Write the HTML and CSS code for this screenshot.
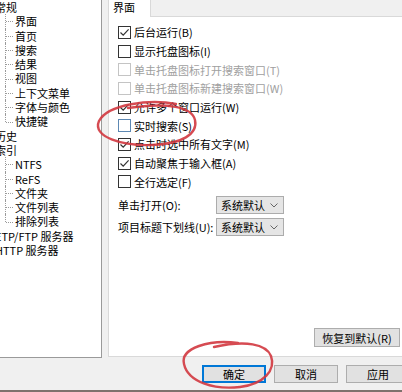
FILE: index.html
```html
<!DOCTYPE html>
<html lang="zh-CN">
<head>
  <meta charset="UTF-8">
  <title>选项</title>
  <link rel="stylesheet" href="styles.css">
</head>
<body>
  <div class="window">
    <div class="main">
      <ul class="tree">
        <li class="row top">常规</li>
        <li class="row kid">界面</li>
        <li class="row kid">首页</li>
        <li class="row kid">搜索</li>
        <li class="row kid">结果</li>
        <li class="row kid">视图</li>
        <li class="row kid">上下文菜单</li>
        <li class="row kid">字体与颜色</li>
        <li class="row kid last">快捷键</li>
        <li class="row top">历史</li>
        <li class="row top">索引</li>
        <li class="row kid">NTFS</li>
        <li class="row kid">ReFS</li>
        <li class="row kid">文件夹</li>
        <li class="row kid">文件列表</li>
        <li class="row kid last">排除列表</li>
        <li class="row top">ETP/FTP 服务器</li>
        <li class="row top">HTTP 服务器</li>
      </ul>

      <div class="pane">
        <div class="tabs">
          <div class="tab">界面</div>
        </div>
        <div class="page">
          <div class="check on"><span class="box"><svg viewBox="0 0 11 11"><path d="M1.5 5.5 L4.2 8.2 L9.6 2.4"/></svg></span>后台运行(B)</div>
          <div class="check"><span class="box"></span>显示托盘图标(I)</div>
          <div class="check off"><span class="box"></span>单击托盘图标打开搜索窗口(T)</div>
          <div class="check off"><span class="box"></span>单击托盘图标新建搜索窗口(W)</div>
          <div class="check on"><span class="box"><svg viewBox="0 0 11 11"><path d="M1.5 5.5 L4.2 8.2 L9.6 2.4"/></svg></span>允许多个窗口运行(W)</div>
          <div class="check hot"><span class="box"></span>实时搜索(S)</div>
          <div class="check on"><span class="box"><svg viewBox="0 0 11 11"><path d="M1.5 5.5 L4.2 8.2 L9.6 2.4"/></svg></span>点击时选中所有文字(M)</div>
          <div class="check on"><span class="box"><svg viewBox="0 0 11 11"><path d="M1.5 5.5 L4.2 8.2 L9.6 2.4"/></svg></span>自动聚焦于输入框(A)</div>
          <div class="check"><span class="box"></span>全行选定(F)</div>

          <div class="combos">
            <span class="label">单击打开(O):</span>
            <div class="combo">系统默认<svg viewBox="0 0 8 5"><path d="M0.5 0.5 L4 4 L7.5 0.5"/></svg></div>
            <span class="label">项目标题下划线(U):</span>
            <div class="combo">系统默认<svg viewBox="0 0 8 5"><path d="M0.5 0.5 L4 4 L7.5 0.5"/></svg></div>
          </div>

          <div class="page-foot">
            <button class="btn reset">恢复到默认(R)</button>
          </div>
        </div>
      </div>
    </div>

    <div class="footer">
      <button class="btn default">确定</button>
      <button class="btn">取消</button>
      <button class="btn">应用</button>
    </div>

    <!-- hand-drawn red marks on top of the dialog -->
    <svg class="marks" width="412" height="392" viewBox="0 0 412 392">
      <path d="M176 104 C150 99 108 104 99 121 C92 137 122 146 152 145 C182 144 198 134 195 120 C192 107 168 102 128 108"/>
      <path d="M238 343 C210 339 180 348 184 364 C188 382 214 390 240 387 C264 384 276 370 271 356 C266 344 246 340 214 347"/>
    </svg>
  </div>
</body>
</html>
```

FILE: styles.css
```css
body {
  margin: 0;
  overflow: hidden;
  background: #f0f0f0;
  font-family: "Noto Sans CJK SC", "Liberation Sans", sans-serif;
  font-size: 11px;
  color: #000;
}

.window {
  position: relative;
  width: 412px;
  height: 390px;
  border-bottom: 2px solid #7d716c;
  display: flex;
  flex-direction: column;
}

.main {
  display: flex;
  height: 358px;
}

/* tree on the left */
.tree {
  list-style: none;
  margin: 0;
  padding: 0;
  width: 101px;
  height: 357px;
  background: #fff;
  border-right: 1px solid #9a9a9a;
  border-bottom: 1px solid #9a9a9a;
  overflow: hidden;
}

.row {
  position: relative;
  height: 14.3px;
  line-height: 14.3px;
  white-space: nowrap;
}

.row.top {
  padding-left: 0;
  margin-left: -5px;
}

.row.kid {
  padding-left: 15px;
}

.row.kid::before {
  content: "";
  position: absolute;
  left: 5px;
  top: 0;
  bottom: 0;
  border-left: 1px dotted #9a9a9a;
}

.row.kid.last::before {
  bottom: 50%;
}

.row.kid::after {
  content: "";
  position: absolute;
  left: 6px;
  top: 50%;
  width: 7px;
  border-top: 1px dotted #9a9a9a;
}

/* right side */
.pane {
  margin-left: 6px;
  width: 304px;
  height: 357px;
  display: flex;
  flex-direction: column;
}

.tabs {
  height: 16px;
  display: flex;
}

.tab {
  width: 37px;
  height: 17px;
  background: #fff;
  border: 1px solid #d9d9d9;
  border-top: none;
  border-bottom: none;
  padding-left: 4px;
  line-height: 14px;
  position: relative;
  z-index: 1;
}

.page {
  flex: 1;
  background: #fff;
  border: 1px solid #d9d9d9;
  padding: 6px 11px 9px 9px;
  display: flex;
  flex-direction: column;
}

.check {
  display: flex;
  align-items: center;
  height: 18.7px;
  white-space: nowrap;
}

.box {
  width: 11px;
  height: 11px;
  border: 1px solid #333;
  margin-right: 3px;
  background: #fff;
  display: flex;
}

.box svg {
  width: 11px;
  height: 11px;
}

.box path {
  fill: none;
  stroke: #333;
  stroke-width: 1.2;
}

.check.off {
  color: #a0a0a0;
}

.check.off .box {
  border-color: #c4c4c4;
}

.check.hot .box {
  border-color: #5d88b3;
}

.combos {
  display: grid;
  grid-template-columns: 98px 68px;
  grid-auto-rows: 18px;
  row-gap: 4px;
  margin-top: 5px;
  align-items: center;
}

.combo {
  height: 16px;
  background: #e5e5e5;
  border: 1px solid #acacac;
  padding-left: 4px;
  display: flex;
  align-items: center;
  justify-content: space-between;
  padding-right: 5px;
}

.combo svg {
  width: 8px;
  height: 5px;
}

.combo path {
  fill: none;
  stroke: #666;
  stroke-width: 1;
}

.page-foot {
  margin-top: auto;
  display: flex;
  justify-content: flex-end;
}

.btn {
  font: inherit;
  color: #000;
  background: #e1e1e1;
  border: 1px solid #adadad;
  width: 64px;
  height: 18px;
  padding: 0;
  line-height: 16px;
}

.btn.reset {
  width: 86px;
  height: 19px;
}

.footer {
  display: flex;
  justify-content: flex-end;
  gap: 8px;
  padding: 7px 2px 0 0;
}

.btn.default {
  border-color: #0078d7;
  box-shadow: inset 0 0 0 1px #0078d7;
}

.marks {
  position: absolute;
  left: 0;
  top: 0;
  pointer-events: none;
}

.marks path {
  fill: none;
  stroke: #d2373f;
  stroke-width: 2.4;
  stroke-linecap: round;
  opacity: 0.9;
}
```
